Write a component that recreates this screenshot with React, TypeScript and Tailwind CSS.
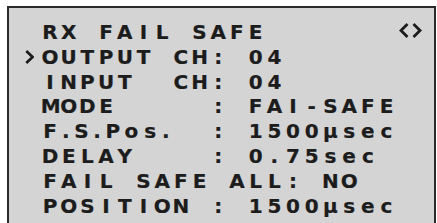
import React from "react";

const CELL = "inline-block w-[18.7px] shrink-0 text-center";
const NARROW = "inline-block w-[12.7px] shrink-0 text-center";

function Cells({ text, narrowDots = false }: { text: string; narrowDots?: boolean }) {
  return (
    <>
      {Array.from(text).map((ch, i) => (
        <span key={i} className={narrowDots && ch === "." ? NARROW : CELL}>
          {ch === " " ? "\u00a0" : ch}
        </span>
      ))}
    </>
  );
}

function Cursor() {
  return (
    <svg width="9" height="14" viewBox="0 0 9 14" className="block">
      <polyline points="1.3,1 7.6,7 1.3,13" fill="none" stroke="#1c1c1c" strokeWidth="2.8" />
    </svg>
  );
}

function Arrows() {
  return (
    <svg width="23" height="15" viewBox="0 0 23 15" className="mb-[3px] mr-[12px] ml-auto block">
      <polyline points="8.5,1 2,7.5 8.5,14" fill="none" stroke="#1c1c1c" strokeWidth="2.8" />
      <polyline points="14.5,1 21,7.5 14.5,14" fill="none" stroke="#1c1c1c" strokeWidth="2.8" />
    </svg>
  );
}

function Row({
  active = false,
  label,
  rest,
  narrowDots = false,
}: {
  active?: boolean;
  label: string;
  rest: string;
  narrowDots?: boolean;
}) {
  return (
    <div className="flex h-[24.8px] items-center leading-[24.8px]">
      <span className="flex w-[18.7px] shrink-0 items-center pl-[3px]">{active && <Cursor />}</span>
      <span className="flex w-[168.3px] shrink-0">
        <Cells text={label} narrowDots={narrowDots} />
      </span>
      <Cells text={rest} />
    </div>
  );
}

export default function App() {
  return (
    <div className="h-[223px] w-[437px] overflow-hidden bg-white pl-[7px] pt-[6px]">
      <div className="h-[232px] w-[429px] border-2 border-[#2a2a2a] bg-[#d4d4d4] pl-[13px] pt-[12px] font-['DejaVu_Sans',Verdana,sans-serif] text-[20px] font-bold text-[#1c1c1c] [-webkit-text-stroke:0.2px_#1c1c1c]">
        <div className="flex h-[24.8px] items-center leading-[24.8px]">
          <span className="w-[18.7px] shrink-0" />
          <Cells text="RX FAIL SAFE" />
          <Arrows />
        </div>
        <Row active label="OUTPUT CH" rest=": 04" />
        <Row label="INPUT  CH" rest=": 04" />
        <Row label="MODE" rest=": FAI-SAFE" />
        <Row label="F.S.Pos." rest=": 1500μsec" narrowDots />
        <Row label="DELAY" rest=": 0.75sec" />
        <Row label="FAIL SAFE" rest=" ALL: NO" />
        <Row label="POSITION" rest=": 1500μsec" />
      </div>
    </div>
  );
}
